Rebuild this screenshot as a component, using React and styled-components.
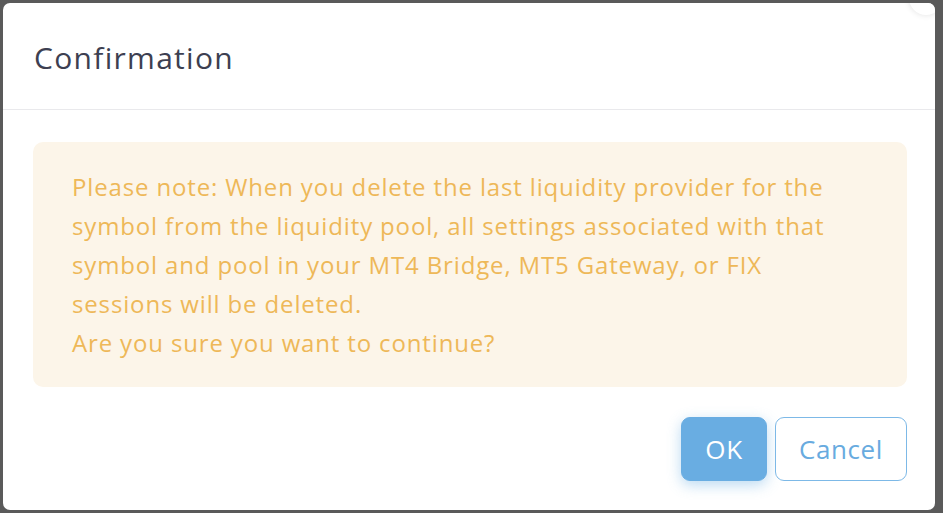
import React from "react";
import styled, { createGlobalStyle } from "styled-components";

const GlobalStyle = createGlobalStyle`
  html, body {
    margin: 0;
    padding: 0;
    background: #5a5a5a;
    height: 100%;
    overflow: hidden;
  }
  body {
    font-family: "Open Sans", Lato, Arial, sans-serif;
  }
`;

function App() {
  return (
    <>
      <GlobalStyle />
      <Backdrop>
        <Modal>
          <CloseKnob />
          <Header>
            <Title>Confirmation</Title>
          </Header>
          <Body>
            <Alert>
              Please note: When you delete the last liquidity provider for the
              symbol from the liquidity pool, all settings associated with that
              symbol and pool in your MT4 Bridge, MT5 Gateway, or FIX sessions
              will be deleted.
              <br />
              Are you sure you want to continue?
            </Alert>
          </Body>
          <Footer>
            <Button primary>OK</Button>
            <Button>Cancel</Button>
          </Footer>
        </Modal>
      </Backdrop>
    </>
  );
}

// styled component
const Backdrop = styled.div`
  width: 943px;
  height: 513px;
  padding: 3px 8px 3px 3px;
  box-sizing: border-box;
`;

const Modal = styled.div`
  position: relative;
  width: 932px;
  height: 507px;
  background: #fff;
  border-radius: 7px;
  display: flex;
  flex-direction: column;
  overflow: hidden;
`;

const CloseKnob = styled.div`
  position: absolute;
  top: -22px;
  right: -8px;
  width: 34px;
  height: 34px;
  border-radius: 50%;
  background: #fff;
  box-shadow: 0 0 6px rgba(0, 0, 0, 0.12);
  &::after {
    content: "";
    position: absolute;
    left: 10px;
    top: 18px;
    width: 8px;
    height: 4px;
    background: #4a6fd0;
    border-radius: 2px;
  }
`;

const Header = styled.div`
  height: 107px;
  border-bottom: 1px solid #e9e9ec;
  display: flex;
  align-items: center;
  padding: 0 31px;
  box-sizing: border-box;
`;

const Title = styled.h2`
  margin: 2px 0 0 0;
  font-size: 30px;
  font-weight: 400;
  color: #3d3f51;
  letter-spacing: 1.3px;
`;

const Body = styled.div`
  padding: 32px 28px 30px 30px;
`;

const Alert = styled.div`
  background: #fcf5e9;
  border-radius: 10px;
  padding: 25px 39px;
  color: #eeb858;
  font-size: 24px;
  line-height: 39px;
  letter-spacing: 0.85px;
`;

const Footer = styled.div`
  display: flex;
  justify-content: flex-end;
  gap: 8px;
  padding: 0 28px 0 30px;
`;

const Button = styled.button`
  height: 64px;
  padding: 0;
  width: ${(p) => (p.primary ? "86px" : "132px")};
  border-radius: 9px;
  font-family: inherit;
  font-size: 26px;
  letter-spacing: 0.6px;
  cursor: pointer;
  border: 1px solid ${(p) => (p.primary ? "#69ade2" : "#7db9e7")};
  background: ${(p) => (p.primary ? "#69ade2" : "#fff")};
  color: ${(p) => (p.primary ? "#fff" : "#68abdf")};
  box-shadow: ${(p) =>
    p.primary ? "0 4px 14px rgba(105, 173, 226, 0.45)" : "none"};
`;

export default App;
